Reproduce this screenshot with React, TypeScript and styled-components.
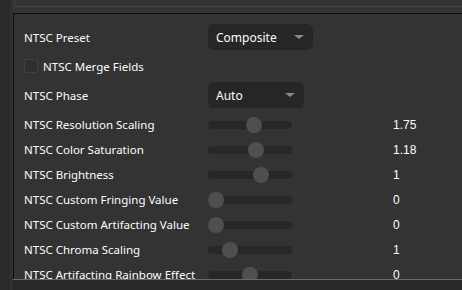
import React from "react";
import styled, { createGlobalStyle } from "styled-components";

const GlobalStyle = createGlobalStyle`
  html, body {
    margin: 0;
    padding: 0;
    background: #2b2b2b;
    overflow: hidden;
  }
`;

const Window = styled.div`
  display: flex;
  width: 462px;
  height: 290px;
  background: #2b2b2b;
  font-family: "Noto Sans", "Lato", sans-serif;
`;

const SideStrip = styled.div`
  width: 10px;
  flex-shrink: 0;
  background: #2a2a2a;
`;

const SideGutter = styled.div`
  width: 3px;
  flex-shrink: 0;
  background: #313131;
`;

const Main = styled.div`
  flex: 1;
  display: flex;
  flex-direction: column;
  min-width: 0;
  background: #333333;
`;

const TopBox = styled.div`
  height: 6px;
  margin-left: 1px;
  border-left: 1px solid #474747;
  border-bottom: 1px solid #474747;
  border-bottom-left-radius: 4px;
  background: #333333;
`;

const TopGap = styled.div`
  height: 6px;
  background: #333333;
`;

const Panel = styled.div`
  height: 266px;
  overflow: hidden;
  border-top: 1px solid #0d0d0d;
  border-left: 1px solid #0d0d0d;
  background: #333333;
  padding: 10px 0 0 10px;
  box-sizing: border-box;
  color: #fdfdfd;
`;

const PanelEdge = styled.div`
  height: 1px;
  background: #6a6a6a;
`;

const Footer = styled.div`
  flex: 1;
  background: #282828;
`;

const Rows = styled.div`
  display: flex;
  flex-direction: column;
  gap: 4px;
`;

const Row = styled.div<{ h: number }>`
  display: grid;
  grid-template-columns: 184px 185px 1fr;
  align-items: center;
  height: ${(p) => p.h}px;
`;

const Label = styled.div`
  font-size: 11.5px;
  white-space: nowrap;
`;

const Select = styled.div<{ w: number }>`
  width: ${(p) => p.w}px;
  height: 26px;
  box-sizing: border-box;
  border-radius: 6px;
  background: #262626;
  display: flex;
  align-items: center;
  justify-content: space-between;
  padding: 0 9px 0 8px;
  font-size: 12px;
`;

const Caret = styled.span`
  width: 0;
  height: 0;
  border-left: 5px solid transparent;
  border-right: 5px solid transparent;
  border-top: 4px solid #8a8a8a;
`;

const CheckRow = styled.label`
  display: flex;
  align-items: center;
  gap: 5px;
  font-size: 11.5px;
  white-space: nowrap;
`;

const Box = styled.span`
  width: 14px;
  height: 14px;
  box-sizing: border-box;
  border: 1px solid #414141;
  border-radius: 2px;
  background: #2f2f2f;
`;

const SliderTrack = styled.div`
  position: relative;
  width: 84px;
  height: 8px;
  border-radius: 4px;
  background: #272727;
`;

const Thumb = styled.span`
  position: absolute;
  top: 50%;
  width: 16px;
  height: 16px;
  margin: -8px 0 0 -8px;
  border-radius: 50%;
  background: #4f4f4f;
`;

const Value = styled.div`
  font-family: "Liberation Sans", Arial, sans-serif;
  font-size: 12px;
`;

const sliders = [
  { label: "NTSC Resolution Scaling", value: "1.75", pos: 46 },
  { label: "NTSC Color Saturation", value: "1.18", pos: 48 },
  { label: "NTSC Brightness", value: "1", pos: 53 },
  { label: "NTSC Custom Fringing Value", value: "0", pos: 8 },
  { label: "NTSC Custom Artifacting Value", value: "0", pos: 8 },
  { label: "NTSC Chroma Scaling", value: "1", pos: 22 },
  { label: "NTSC Artifacting Rainbow Effect", value: "0", pos: 42 },
];

const SliderGroup = styled.div`
  display: flex;
  flex-direction: column;
  gap: 4px;
  margin-top: 2px;
`;

export default function App() {
  return (
    <>
      <GlobalStyle />
      <Window>
        <SideStrip />
        <SideGutter />
        <Main>
          <TopBox />
          <TopGap />
          <Panel>
            <Rows>
              <Row h={26}>
                <Label>NTSC Preset</Label>
                <Select w={105}>
                  Composite
                  <Caret />
                </Select>
              </Row>
              <Row h={24}>
                <CheckRow>
                  <Box />
                  NTSC Merge Fields
                </CheckRow>
              </Row>
              <Row h={26}>
                <Label>NTSC Phase</Label>
                <Select w={96}>
                  Auto
                  <Caret />
                </Select>
              </Row>
              <SliderGroup>
                {sliders.map((s) => (
                  <Row h={21} key={s.label}>
                    <Label>{s.label}</Label>
                    <SliderTrack>
                      <Thumb style={{ left: `${s.pos}px` }} />
                    </SliderTrack>
                    <Value>{s.value}</Value>
                  </Row>
                ))}
              </SliderGroup>
            </Rows>
          </Panel>
          <PanelEdge />
          <Footer />
        </Main>
      </Window>
    </>
  );
}
